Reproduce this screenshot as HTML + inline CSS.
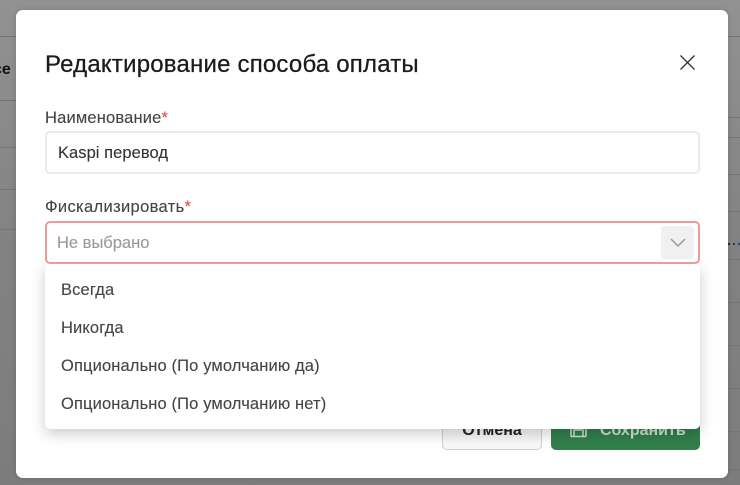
<!DOCTYPE html>
<html><head><meta charset="utf-8">
<style>
html,body{margin:0;padding:0;width:740px;height:485px;overflow:hidden;background:#8a8a8a;font-family:"Liberation Sans","DejaVu Sans",sans-serif}
#w{position:absolute;left:0;top:0;width:740px;height:485px;overflow:hidden;filter:blur(.3px)}
.a{position:absolute;white-space:nowrap}
.bg{position:absolute;left:0;top:0;width:740px;height:485px;background:linear-gradient(#929292,#828282 50%,#7c7c7c)}
.ln{position:absolute;height:1px;background:#757575}
.modal{position:absolute;left:16px;top:10px;width:712px;height:468px;background:#fff;border-radius:7px;box-shadow:0 0 6px rgba(0,0,0,.15)}
.input{position:absolute;box-sizing:border-box;background:#fff;border-radius:5px}
.t{font-size:16.5px;line-height:20px;letter-spacing:.13px;-webkit-text-stroke:.12px currentColor}
.d{position:absolute;top:243px;width:2px;height:2px;background:#223}
</style></head><body>
<div id="w">
<div class="bg"></div>
<div class="ln" style="left:0;top:36px;width:16px"></div>
<div class="ln" style="left:0;top:100px;width:16px"></div>
<div class="ln" style="left:0;top:147px;width:16px"></div>
<div class="ln" style="left:0;top:189px;width:16px"></div>
<div class="ln" style="left:0;top:229px;width:16px"></div>
<div class="ln" style="left:728px;top:36px;width:12px"></div>
<div class="ln" style="left:728px;top:117px;width:12px"></div>
<div class="ln" style="left:728px;top:137px;width:12px"></div>
<div class="ln" style="left:728px;top:174px;width:12px"></div>
<div class="ln" style="left:728px;top:211px;width:12px"></div>
<div class="ln" style="left:728px;top:259px;width:12px"></div>
<div class="ln" style="left:728px;top:302px;width:12px"></div>
<div class="ln" style="left:728px;top:345px;width:12px"></div>
<div class="ln" style="left:728px;top:388px;width:12px"></div>
<div class="ln" style="left:728px;top:431px;width:12px"></div>
<div class="ln" style="left:728px;top:469px;width:12px"></div>
<div class="a" style="left:-7px;top:61px;font-size:16px;font-weight:bold;line-height:18px;color:#111">се</div>
<div class="d" style="left:728px"></div><div class="d" style="left:733px;background:#432"></div><div class="d" style="left:738px;background:#246"></div>

<div class="modal"></div>
<div class="a" style="left:45px;top:51px;font-size:24px;line-height:28px;color:#1b1b1b;letter-spacing:.2px;-webkit-text-stroke:.25px #1b1b1b">Редактирование способа оплаты</div>
<svg class="a" style="left:679px;top:54px" width="18" height="18" viewBox="0 0 18 18"><path d="M1.5 1.5L15.5 15.5M15.5 1.5L1.5 15.5" stroke="#333" stroke-width="1.3" fill="none"/></svg>

<div class="a t" style="left:45px;top:108px;color:#444;letter-spacing:.18px">Наименование<span style="color:#e04a4a">*</span></div>
<div class="input" style="left:45px;top:131px;width:655px;height:43px;border:2px solid #ebebeb"></div>
<div class="a t" style="left:58px;top:143px;color:#333;letter-spacing:.05px">Kaspi перевод</div>

<div class="a t" style="left:45px;top:197px;color:#444;letter-spacing:.35px">Фискализировать<span style="color:#e04a4a">*</span></div>

<div class="a" style="left:442px;top:412px;width:100px;height:38px;box-sizing:border-box;border:1px solid #cfcfcf;border-radius:5px;background:#f7f7f7;text-align:center;font-size:16px;font-weight:bold;line-height:36px;color:#222">Отмена</div>
<div class="a" style="left:551px;top:412px;width:149px;height:38px;border-radius:5px;background:#317f4b;font-size:16px;font-weight:bold;line-height:37px;color:#cfe0d5;text-indent:49px">Сохранить</div>
<svg class="a" style="left:569px;top:420px" width="19" height="18" viewBox="0 0 19 18"><path d="M2 3H17V15.5A1 1 0 0 1 16 16.5H3A1 1 0 0 1 2 15.5ZM5 16V10H14V16" stroke="#cfe0d5" stroke-width="1.5" fill="none"/></svg>

<div class="a" style="left:45px;top:263px;width:655px;height:166px;background:#fff;border-radius:5px;box-shadow:0 5px 14px rgba(0,0,0,.2)"></div>
<div class="input" style="left:45px;top:221px;width:655px;height:43px;border:2px solid #ef9a96"></div>
<div class="a t" style="left:57px;top:233px;color:#999;letter-spacing:0">Не выбрано</div>
<div class="a" style="left:661px;top:226px;width:33px;height:33px;border-radius:4px;background:#f0f0f0"></div>
<svg class="a" style="left:669px;top:237px" width="18" height="12" viewBox="0 0 18 12"><path d="M2 2L9 9L16 2" stroke="#999" stroke-width="1.5" fill="none"/></svg>

<div class="a t" style="left:61px;top:280px;color:#444">Всегда</div>
<div class="a t" style="left:61px;top:318px;color:#444">Никогда</div>
<div class="a t" style="left:61px;top:356px;color:#444">Опционально (По умолчанию да)</div>
<div class="a t" style="left:61px;top:394px;color:#444">Опционально (По умолчанию нет)</div>
</div>
</body></html>
